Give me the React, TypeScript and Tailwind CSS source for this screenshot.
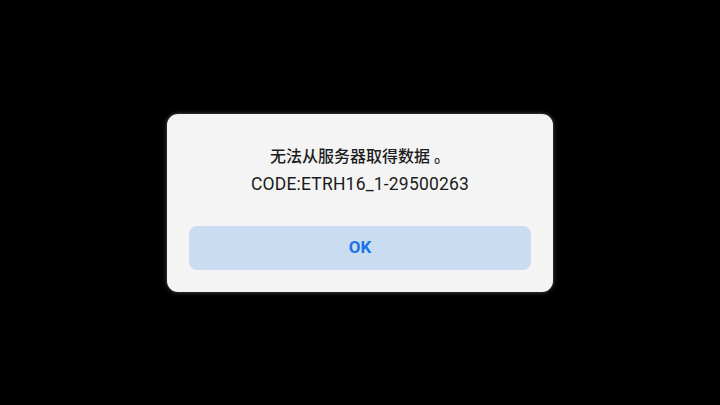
import React from "react";

export default function App() {
  return (
    <div className="w-[720px] h-[405px] bg-black flex items-center justify-center">
      <div
        className="w-[386px] h-[178px] rounded-[11px] bg-[#f4f4f4] shadow-[0_0_4px_rgba(255,255,255,0.35)] flex flex-col px-[22px] pb-[22px]"
        style={{ fontFamily: "Roboto, 'Noto Sans CJK SC', sans-serif" }}
      >
        <div className="flex-1 flex flex-col items-center justify-center pt-[2px] text-[#1c1c1c]">
          <div className="text-[16px] font-medium leading-[24px]">无法从服务器取得数据 。</div>
          <div className="text-[17.5px] leading-[24px] mt-[3px] tracking-[0.2px]">CODE:ETRH16_1-29500263</div>
        </div>
        <button className="h-[44px] w-full rounded-[8px] bg-[#c9dcf1] text-[#1a73e8] text-[17px] font-bold">
          OK
        </button>
      </div>
    </div>
  );
}
